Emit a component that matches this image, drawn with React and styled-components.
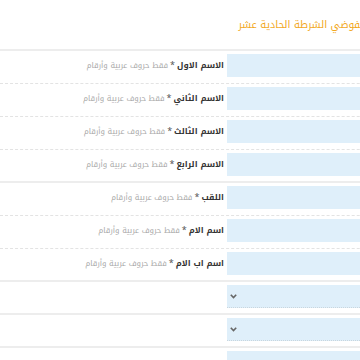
import React from "react";
import styled, { createGlobalStyle } from "styled-components";

const GlobalStyle = createGlobalStyle`
  html, body {
    margin: 0;
    padding: 0;
    background: #ffffff;
  }
  body {
    width: 360px;
    height: 360px;
    overflow: hidden;
    font-family: "Noto Kufi Arabic", "Noto Sans Arabic", "DejaVu Sans Condensed", "DejaVu Sans", sans-serif;
  }
`;

const Page = styled.div`
  width: 420px;
  direction: rtl;
  background: #ffffff;
`;

const Header = styled.div`
  height: 49px;
  display: flex;
  align-items: center;
  border-bottom: 2px solid #ededed;
  padding-right: 54px;
`;

const Title = styled.h3`
  margin: 0;
  margin-top: -1px;
  font-size: 10.2px;
  font-weight: normal;
  color: #f2a81d;
  white-space: nowrap;
`;

const Row = styled.div`
  display: flex;
  align-items: center;
  padding: 3px 0 ${(p) => (p.$solid ? 5 : 6)}px;
  border-bottom: ${(p) => (p.$solid ? "2px solid #ededed" : "1px dashed #e3e3e3")};
`;

const Field = styled.div`
  position: relative;
  width: 193px;
  flex: none;
`;

const TextInput = styled.input`
  display: block;
  box-sizing: border-box;
  width: 100%;
  height: 23px;
  border: none;
  background: #dfeffa;
  outline: none;
`;

const Select = styled.select`
  display: block;
  box-sizing: border-box;
  width: 100%;
  height: 23px;
  border: none;
  border-bottom: 1px dotted #c9d6de;
  background: #dfeffa;
  appearance: none;
  outline: none;
`;

const Chevron = styled.svg`
  position: absolute;
  left: 3px;
  top: 9px;
  pointer-events: none;
`;

const Label = styled.label`
  flex: 1;
  padding-right: 3px;
  font-size: 7.8px;
  line-height: 14px;
  color: #a8a8a8;
  white-space: nowrap;
`;

const Name = styled.span`
  font-size: 8.4px;
  font-weight: bold;
  color: #333;
`;

const Star = styled.span`
  font-size: 9px;
  color: #555;
  margin: 0 2px;
`;

const fields = [
  { name: "الاسم الاول" },
  { name: "الاسم الثاني" },
  { name: "الاسم الثالث" },
  { name: "الاسم الرابع", solid: true },
  { name: "اللقب" },
  { name: "اسم الام" },
  { name: "اسم اب الام", solid: true },
];

function App() {
  return (
    <>
      <GlobalStyle />
      <Page>
        <Header>
          <Title>مفوضي الشرطة الحادية عشر</Title>
        </Header>
        {fields.map((f) => (
          <Row key={f.name} $solid={f.solid}>
            <Field>
              <TextInput type="text" />
            </Field>
            <Label>
              <Name>{f.name}</Name>
              <Star>*</Star>
              فقط حروف عربية وأرقام
            </Label>
          </Row>
        ))}
        {[1, 2, 3].map((i) => (
          <Row key={i} $solid>
            <Field>
              <Select defaultValue="">
                <option value=""></option>
              </Select>
              <Chevron width="7" height="5" viewBox="0 0 7 5">
                <path d="M0.8 0.8 L3.5 3.6 L6.2 0.8" fill="none" stroke="#666" strokeWidth="1.6" />
              </Chevron>
            </Field>
            <Label />
          </Row>
        ))}
      </Page>
    </>
  );
}

export default App;
